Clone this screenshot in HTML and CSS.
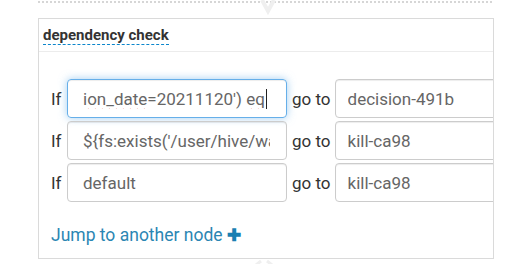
FILE: index.html
```html
<!DOCTYPE html>
<html lang="en">
<head>
  <meta charset="UTF-8" />
  <title>Decision node</title>
  <link rel="stylesheet" href="styles.css">
</head>
<body>
  <div class="canvas">
    <div class="flow-line"></div>

    <svg class="arrow arrow-top" width="20" height="16" viewBox="0 0 20 16">
      <path d="M4 0 L10 11 L16 0" fill="none" stroke="#efefef" stroke-width="4" />
    </svg>

    <div class="node">
      <div class="node-header">
        <span class="node-title">dependency check</span>
      </div>

      <div class="node-body">
        <div class="rule">
          <span class="if">If</span>
          <div class="field field-cond focused">
            <div class="field-text"><span class="typo">ion_date</span>=20211120') <span class="typo">eq</span><span class="caret"></span></div>
          </div>
          <span class="goto">go to</span>
          <div class="field field-target">
            <div class="field-text">decision-491b</div>
          </div>
        </div>

        <div class="rule">
          <span class="if">If</span>
          <div class="field field-cond">
            <div class="field-text">${fs:exists('/user/hive/warehouse')}</div>
          </div>
          <span class="goto">go to</span>
          <div class="field field-target">
            <div class="field-text">kill-ca98</div>
          </div>
        </div>

        <div class="rule">
          <span class="if">If</span>
          <div class="field field-cond">
            <div class="field-text">default</div>
          </div>
          <span class="goto">go to</span>
          <div class="field field-target">
            <div class="field-text">kill-ca98</div>
          </div>
        </div>

        <a class="add-link" href="#">Jump to another node <span class="plus">&#10010;</span></a>
      </div>
    </div>

    <svg class="arrow arrow-bottom" width="24" height="8" viewBox="0 0 24 8">
      <path d="M4 8 L9 4 M15 4 L20 8" fill="none" stroke="#efefef" stroke-width="3" />
    </svg>
  </div>
</body>
</html>
```

FILE: styles.css
```css
* {
  box-sizing: border-box;
  margin: 0;
  padding: 0;
}

body {
  font-family: Roboto, 'Liberation Sans', sans-serif;
  background: #ffffff;
  color: #333;
  width: 522px;
  height: 264px;
  overflow: hidden;
}

.canvas {
  position: relative;
  padding-top: 1px;
}

.flow-line {
  margin-left: 38px;
  width: 456px;
  height: 2px;
  background: repeating-linear-gradient(90deg, #d6d6d6 0, #d6d6d6 2px, transparent 2px, transparent 4px);
}

.arrow {
  position: absolute;
}

.arrow-top {
  left: 258px;
  top: 0;
}

.arrow-bottom {
  left: 252px;
  top: 257px;
}

.node {
  margin: 15px 0 0 38px;
  width: 456px;
  height: 241px;
  border: 1px solid #dadada;
  overflow: hidden;
  background: #fff;
}

.node-header {
  padding: 6px 4px 6px;
  border-bottom: 1px solid #ececec;
}

.node-title {
  display: inline-block;
  font-size: 15px;
  font-weight: bold;
  line-height: 18px;
  color: #333;
  border-bottom: 1px dashed #0b86cc;
}

.node-body {
  padding: 27px 0 16px 12px;
}

.rule {
  display: flex;
  align-items: center;
  margin-bottom: 3px;
  font-size: 17px;
}

.if {
  width: 16px;
  flex-shrink: 0;
  color: #333;
}

.goto {
  flex-shrink: 0;
  padding: 0 4px 0 5px;
  color: #333;
}

.field {
  flex-shrink: 0;
  height: 39px;
  border: 1px solid #cccccc;
  border-radius: 4px;
  display: flex;
  align-items: center;
  color: #666;
  box-shadow: inset 0 1px 1px rgba(0,0,0,0.075);
}

.field-cond {
  width: 220px;
  padding: 0 16px 0 15px;
}

.field-target {
  width: 220px;
  padding: 0 12px;
}

.focused {
  border-color: #66afe9;
  box-shadow: inset 0 1px 1px rgba(0,0,0,0.075), 0 0 8px rgba(102,175,233,0.6);
}

.field-text {
  width: 100%;
  overflow: hidden;
  white-space: nowrap;
  line-height: 20px;
}

.typo {
  text-decoration: underline wavy #e0261e;
  text-decoration-thickness: 1px;
  text-underline-offset: 3px;
}

.caret {
  display: inline-block;
  width: 1px;
  height: 20px;
  margin-left: 1px;
  background: #222;
  vertical-align: -4px;
}

.add-link {
  display: inline-block;
  margin-top: 20px;
  font-size: 17.5px;
  line-height: 20px;
  color: #2b86b3;
  text-decoration: none;
}

.plus {
  color: #1a7fb2;
  font-size: 17px;
  font-weight: bold;
}
```
